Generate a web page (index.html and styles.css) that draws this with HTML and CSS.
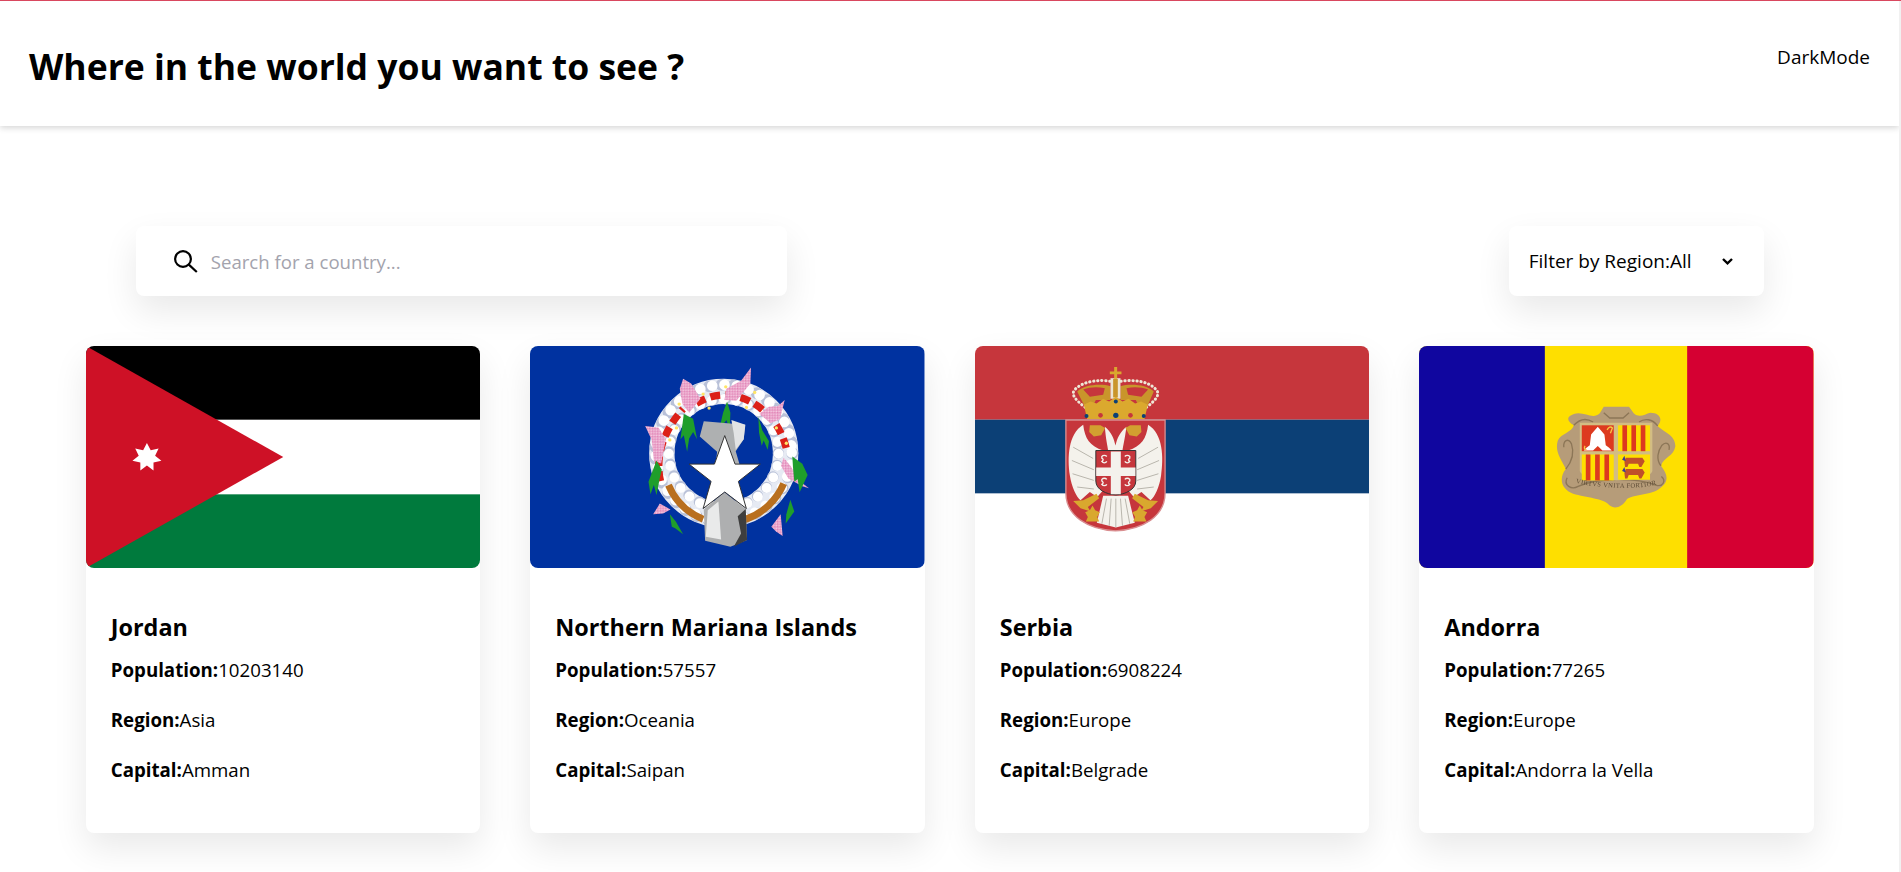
FILE: index.html
```html
<!DOCTYPE html>
<html lang="en">
<head>
  <meta charset="utf-8">
  <title>Where in the world you want to see ?</title>
  <link rel="stylesheet" href="styles.css">
</head>
<body>
  <div class="page">
    <header class="topbar">
      <h1 class="topbar__title">Where in the world you want to see ?</h1>
      <button class="topbar__mode">DarkMode</button>
    </header>

    <main class="content">
      <div class="toolbar">
        <label class="search">
          <svg class="search__icon" viewBox="0 0 24 24" fill="none" stroke="#000" stroke-width="2.200"><circle cx="9" cy="10" r="7.900"/><path d="M14.800 15.600l8 7.400"/></svg>
          <input class="search__input" type="text" placeholder="Search for a country...">
        </label>
        <div class="filter">
          <span>Filter by Region:All</span>
          <svg class="filter__arrow" viewBox="0 0 11 7" fill="none" stroke="#000" stroke-width="2.400"><path d="M1 1l4.500 4.300L10 1"/></svg>
        </div>
      </div>

      <section class="cards">
        <article class="card">
          <svg class="card__flag" viewBox="0 0 395 223" preserveAspectRatio="none">
            <rect width="395" height="223" fill="#fff"/>
            <rect width="395" height="74" fill="#000"/>
            <rect y="149" width="395" height="74" fill="#007a3d"/>
            <path d="M0 0L197.500 111.500L0 223z" fill="#ce1126"/>
            <path d="M61 97.500l3.800 7.200 7.900-1.800-3.500 7.300 6.300 5-7.900 1.800 0 8.100-6.600-5-6.600 5 0-8.100-7.900-1.800 6.300-5-3.500-7.300 7.900 1.800z" fill="#fff"/>
          </svg>
          <div class="card__body">
            <h2 class="card__name">Jordan</h2>
            <p class="card__row"><b>Population:</b>10203140</p>
            <p class="card__row"><b>Region:</b>Asia</p>
            <p class="card__row"><b>Capital:</b>Amman</p>
          </div>
        </article>

        <article class="card">
          <svg class="card__flag" viewBox="0 0 395 223" preserveAspectRatio="none">
            <defs>
              <pattern id="petals" width="8" height="8" patternUnits="userSpaceOnUse">
                <rect width="8" height="8" fill="#eba6cb"/>
                <circle cx="2" cy="2" r="1.500" fill="#d65f9f"/>
                <circle cx="6" cy="6" r="1.500" fill="#fdeef5"/>
              </pattern>
            </defs>
            <rect width="395" height="223" fill="#0032a0"/>
            <g class="emblem" transform="translate(90 5) scale(.3333)">
              <!-- wreath -->
              <circle cx="312" cy="308" r="186" fill="none" stroke="#e6eaf3" stroke-width="76"/>
              <g fill="none" stroke-linecap="round" stroke-dasharray="0 37">
                <circle cx="312" cy="308" r="206" stroke="#b9c1d8" stroke-width="36"/>
                <circle cx="312" cy="306" r="204" stroke="#fff" stroke-width="32"/>
                <circle cx="312" cy="308" r="164" stroke="#b9c1d8" stroke-width="34"/>
                <circle cx="312" cy="310" r="165" stroke="#fff" stroke-width="30"/>
              </g>
              <path d="M146 404A192 192 0 0 0 250 507M376 508A192 192 0 0 0 492 400" fill="none" stroke="#b96f1e" stroke-width="21"/>
              <g fill="none" stroke="#dc2018" stroke-width="22" stroke-dasharray="30 16">
                <path d="M122 392C105 320 130 240 190 175"/>
                <path d="M230 158C290 120 360 125 420 170C470 210 490 250 502 302"/>
              </g>
              <g fill="#ffe566">
                <circle cx="150" cy="268" r="5"/><circle cx="178" cy="160" r="5"/><circle cx="250" cy="130" r="5"/><circle cx="318" cy="108" r="5"/><circle cx="405" cy="125" r="5"/><circle cx="470" cy="232" r="5"/><circle cx="500" cy="278" r="5"/><circle cx="170" cy="232" r="5"/><circle cx="268" cy="172" r="5"/><circle cx="380" cy="170" r="5"/>
              </g>
              <!-- flowers -->
              <g fill="url(#petals)">
                <path d="M76 226l40 5 22 34-14 74-22-8-6-62z"/>
                <path d="M190 84l24 14 28 46-34 42-20-26-8-46z"/>
                <path d="M394 50l-2 48-42 52-36-2 6-34 44-24z"/>
                <path d="M495 148l-14 58-28 12-34-28 28-22 28-2z"/>
                <path d="M492 322l22 26 24 42 30 24-20-6-42-24-22-38z"/>
                <path d="M100 492l20-32 32 18-22 12z"/>
                <path d="M455 530l28-38 6 66-20-14z"/>
              </g>
              <!-- leaves -->
              <g fill="#1f9e2b">
                <path d="M110 330l-24 64 6 38 10-28 8 30 10-52 6-24z"/>
                <path d="M192 190l28 14 12 62-12-22-12 20-6 40-10-50-10 12z"/>
                <path d="M322 152l10 34-2 50-10-28-22 30 12-52z"/>
                <path d="M416 198l12 42 20 32-4 26-12-28-6 16-8-40z"/>
                <path d="M518 318l30 22 16 34-24 52-6-40-10 8-4-44z"/>
                <path d="M150 492l18 22 22 38-24-18-10-4z"/>
                <path d="M512 448l12 36-26 36 2-28z"/>
              </g>
              <!-- latte stone and star -->
              <path d="M252 212l124 10-4 44-24 36 12 42-72 0 4-40-52-46z" fill="#aeb0b1"/>
              <path d="M335 208l42 14-5 44-24 32-6-50z" fill="#e2e3e4"/>
              <path d="M252 478l62-52 64 50 4 94-50 20-76-18z" fill="#aeafb0"/>
              <path d="M354 498l24-22 4 94-40 20 22-40z" fill="#3e3e3e"/>
              <path d="M264 480l32-26 8 114-46-8z" fill="#e9eaea"/>
              <path d="M315 255l31 86 76 0-66 52 24 82-65-50-65 50 24-82-66-52 76 0z" fill="#fff" stroke="#333" stroke-width="3"/>
            </g>
          </svg>
          <div class="card__body">
            <h2 class="card__name">Northern Mariana Islands</h2>
            <p class="card__row"><b>Population:</b>57557</p>
            <p class="card__row"><b>Region:</b>Oceania</p>
            <p class="card__row"><b>Capital:</b>Saipan</p>
          </div>
        </article>

        <article class="card">
          <svg class="card__flag" viewBox="0 0 395 223" preserveAspectRatio="none">
            <rect width="395" height="223" fill="#fff"/>
            <rect width="395" height="74" fill="#c6363c"/>
            <rect y="74" width="395" height="74" fill="#0c4076"/>
            <g class="emblem" transform="translate(65 5) scale(.3333)">
              <!-- crown -->
              <path d="M136 170C110 150 95 135 102 120C125 90 180 85 215 92M320 170C345 150 360 135 352 120C330 90 280 85 240 92" fill="none" stroke="#eee7d6" stroke-width="9" stroke-linecap="round" stroke-dasharray="1 11"/>
              <path d="M112 122C135 100 185 98 212 106L212 148L168 148L158 168L135 168zM342 122C320 100 270 98 242 106L242 148L288 148L298 168L322 168z" fill="#c9952b"/>
              <path d="M130 116C150 108 175 108 195 112L190 132L150 138zM325 116C305 108 280 108 260 112L265 132L305 138z" fill="#c6363c"/>
              <rect x="212" y="82" width="30" height="62" fill="#ece5d3"/>
              <rect x="220" y="84" width="14" height="56" fill="#c9952b"/>
              <path d="M223 48h9v14h13v8h-13v14h-9v-14h-13v-8h13z" fill="#d9a82e"/>
              <path d="M132 162l20-10 18 6 20-14 18 8 20-14 20 14 18-8 20 14 18-6 20 10-10 44H142z" fill="#dba92e"/>
              <g fill="#0c4076"><circle cx="228" cy="194" r="8"/><circle cx="140" cy="196" r="6"/><circle cx="312" cy="196" r="6"/><circle cx="228" cy="152" r="6"/></g>
              <g fill="#c6363c"><circle cx="182" cy="194" r="7"/><circle cx="272" cy="194" r="7"/></g>
              <!-- shield -->
              <path d="M78 208H376V428C376 498 310 538 227 542C145 538 78 498 78 428z" fill="#c6363c" stroke="#d98e90" stroke-width="4"/>
              <!-- eagle -->
              <path d="M130 222C85 250 82 320 90 375C95 410 110 440 122 450L150 425L172 440L190 420V300C150 285 135 265 130 222z" fill="#f4f2ec"/>
              <path d="M325 222C370 250 372 320 364 375C359 410 345 440 332 450L305 425L282 440L265 420V300C305 285 320 265 325 222z" fill="#f4f2ec"/>
              <path d="M195 228C215 245 222 262 227 285C232 262 240 245 260 228C255 265 250 285 248 300H205C203 285 198 265 195 228z" fill="#f4f2ec"/>
              <path d="M100 290l60 34M96 330l66 28M98 370l64 20M112 410l50 6M355 290l-60 34M358 330l-66 28M356 370l-64 20M342 410l-50 6" stroke="#b9b6ad" stroke-width="3" fill="none"/>
              <path d="M150 224h32l14 8 -12 22-22 4-14-14zM303 224h-32l-14 8 12 22 22 4 14-14z" fill="#d2a030"/>
              <path d="M190 436h75l20 82-57 14-57-14z" fill="#f4f2ec"/>
              <path d="M200 445l-14 76M214 445l-6 82M228 445v86M242 445l6 82M256 445l14 76" stroke="#b9b6ad" stroke-width="3" fill="none"/>
              <path d="M100 452l30-2 40-20 8 14-34 26 8 14-30-10zM355 452l-30-2-40-20-8 14 34 26-8 14 30-10z" fill="#d9a82e"/>
              <path d="M158 466l8 14 14 6-8 14 6 14-20 0-20 0 6-14-8-14 14-6zM300 466l8 14 14 6-8 14 6 14-20 0-20 0 6-14-8-14 14-6z" fill="#d9a82e"/>
              <path d="M168 300H288V392C288 418 256 432 228 434C200 432 168 418 168 392z" fill="#c6363c" stroke="#333" stroke-width="3"/>
              <path d="M213 303h30v48h44v26h-44v55h-30v-55h-44v-26h44z" fill="#f4f1ec"/>
              <g fill="none" stroke="#f4f1ec" stroke-width="4">
                <path d="M201 318a10 10 0 0 0-15 0v5a10 10 0 0 1 4 5a10 10 0 0 1-4 5a9 9 0 0 0 15 0M255 318a10 10 0 0 1 15 0v5a10 10 0 0 0-4 5a10 10 0 0 0 4 5a9 9 0 0 1-15 0M201 387a10 10 0 0 0-15 0v5a10 10 0 0 1 4 5a10 10 0 0 1-4 5a9 9 0 0 0 15 0M255 387a10 10 0 0 1 15 0v5a10 10 0 0 0-4 5a10 10 0 0 0 4 5a9 9 0 0 1-15 0"/>
              </g>
            </g>
          </svg>
          <div class="card__body">
            <h2 class="card__name">Serbia</h2>
            <p class="card__row"><b>Population:</b>6908224</p>
            <p class="card__row"><b>Region:</b>Europe</p>
            <p class="card__row"><b>Capital:</b>Belgrade</p>
          </div>
        </article>

        <article class="card">
          <svg class="card__flag" viewBox="0 0 395 223" preserveAspectRatio="none">
            <rect width="395" height="223" fill="#fedf00"/>
            <rect width="126" height="223" fill="#10069f"/>
            <rect x="268.500" width="126.500" height="223" fill="#d50032"/>
            <g class="emblem" transform="translate(111 45) scale(.3333)">
              <path d="M210 68L222 48H298L312 68C330 84 345 70 362 66C388 66 402 84 384 106C400 124 438 132 437 168C432 198 402 200 394 226C410 248 420 268 398 288C372 316 320 310 292 326C276 352 254 358 238 344C222 324 170 322 130 310C94 296 86 264 108 236C94 206 74 184 84 150C94 128 126 126 132 104C106 90 110 72 146 68C170 68 192 86 210 68z" fill="#b69c79"/>
              <g fill="none" stroke="#8c7657" stroke-width="4">
                <path d="M222 66L240 82H280L298 66"/>
                <path d="M132 104C150 84 170 82 190 94M384 106C368 84 345 82 328 94"/>
                <path d="M108 236C125 215 135 190 125 160C115 140 100 150 102 170M394 226C378 208 385 180 396 165C410 150 422 160 418 178"/>
                <path d="M112 262C100 285 125 300 145 288C200 262 320 262 378 284C400 292 410 270 395 258"/>
              </g>
              <path d="M150 96H368V240C368 258 320 268 260 270C200 268 150 258 150 240z" fill="#d3bd83"/>
              <rect x="156" y="104" width="96" height="78" fill="#dd3a1f"/>
              <rect x="265" y="104" width="96" height="78" fill="#fedf00"/>
              <rect x="156" y="192" width="96" height="78" fill="#fedf00"/>
              <rect x="265" y="192" width="96" height="76" fill="#fedf00"/>
              <g fill="#dd3a1f">
                <rect x="278" y="104" width="14" height="78"/><rect x="305" y="104" width="14" height="78"/><rect x="333" y="104" width="14" height="78"/>
                <rect x="168" y="192" width="14" height="78"/><rect x="196" y="192" width="14" height="78"/><rect x="224" y="192" width="14" height="78"/>
              </g>
              <path d="M204 108l20 24 4 32 10 8 8 8h-28l-14-14-14 14h-28l8-8 10-8 4-32z" fill="#fff"/>
              <path d="M232 118q8-14 16-6l-6 16M166 166q-6 8 4 12" stroke="#f6c945" stroke-width="4" fill="none"/>
              <path d="M288 202h50l7 10-10 18h-6l-4-10h-28l-4 10h-7l-2-16zM288 236h50l7 10-10 18h-6l-4-10h-28l-4 10h-7l-2-16z" fill="#c0502a"/>
              <path d="M284 196l-7 12 11 4zM284 230l-7 12 11 4z" fill="#3a3a9a"/>
              <path id="motto" d="M138 278C200 292 320 300 382 282" fill="none"/>
              <text class="emblem__motto"><textPath href="#motto">VIRTVS VNITA FORTIOR</textPath></text>
            </g>
          </svg>
          <div class="card__body">
            <h2 class="card__name">Andorra</h2>
            <p class="card__row"><b>Population:</b>77265</p>
            <p class="card__row"><b>Region:</b>Europe</p>
            <p class="card__row"><b>Capital:</b>Andorra la Vella</p>
          </div>
        </article>
      </section>
    </main>
  </div>
  <div class="scrollbar"></div>
</body>
</html>
```

FILE: styles.css
```css
* {
  box-sizing: border-box;
}

html, body {
  height: 100%;
}

body {
  display: flex;
  margin: 0;
  overflow: hidden;
  border-top: 1px solid #d9485f;
  background: #fff;
  color: #000;
  font-family: "Open Sans", "Noto Sans", sans-serif;
  font-size: 19px;
}

.page {
  flex: 1;
  min-width: 0;
}

.scrollbar {
  width: 2px;
  background: #f1f1f1;
}

.topbar {
  display: flex;
  justify-content: space-between;
  align-items: flex-start;
  height: 125px;
  padding: 0 29px;
  box-shadow: 0 2px 6px rgba(0, 0, 0, .16);
}

.topbar__title {
  margin: 40px 0 0;
  font-size: 35.500px;
  line-height: 50px;
  font-weight: 700;
}

.topbar__mode {
  margin-top: 43px;
  padding: 0;
  border: 0;
  background: none;
  color: #000;
  font: inherit;
  line-height: 26px;
}

.content {
  width: 1728px;
  margin: 100px 0 0 85.750px;
}

.toolbar {
  display: flex;
  justify-content: space-between;
  padding: 0 50px;
}

.search, .filter {
  display: flex;
  align-items: center;
  height: 70px;
  border-radius: 8px;
  background: #fff;
  box-shadow: 0 15px 35px rgba(0, 0, 0, .09);
}

.search {
  width: 651px;
  padding-left: 38px;
}

.search__icon {
  width: 24px;
  height: 24px;
  margin-right: 13px;
}

.search__input {
  flex: 1;
  border: 0;
  outline: 0;
  padding: 0;
  background: none;
  font: inherit;
  font-size: 18.600px;
}

.search__input::placeholder {
  color: #a3a3ad;
}

.filter {
  width: 255px;
  padding-left: 20px;
  gap: 30px;
}

.filter__arrow {
  width: 11px;
  height: 7px;
}

.cards {
  display: grid;
  grid-template-columns: repeat(4, 1fr);
  gap: 50px;
  margin-top: 50px;
}

.card {
  height: 487px;
  border-radius: 8px;
  background: #fff;
  box-shadow: 0 15px 35px rgba(0, 0, 0, .09);
}

.card__flag {
  display: block;
  width: 100%;
  height: 222px;
  border-radius: 8px;
}

.emblem {
  filter: blur(.5px);
}

.emblem__motto {
  font-family: "Liberation Serif", serif;
  font-size: 20px;
  letter-spacing: 1px;
  fill: #5b4a34;
}

.card__body {
  padding: 43px 25px 0;
}

.card__name {
  margin: 0 0 13.500px;
  font-size: 23.400px;
  line-height: 32px;
  font-weight: 700;
}

.card__row {
  margin: 0 0 24px;
  font-size: 18.700px;
  line-height: 26px;
}
```
